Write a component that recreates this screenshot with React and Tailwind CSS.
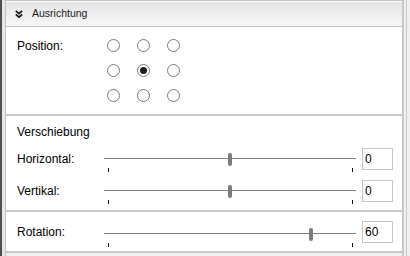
import React from 'react';

const Chevrons = () => (
  <svg width="8" height="8" viewBox="0 0 8 8" fill="none" stroke="#111" strokeWidth="1.7">
    <path d="M0.8 0.8 L4 3.6 L7.2 0.8" />
    <path d="M0.8 4.4 L4 7.2 L7.2 4.4" />
  </svg>
);

const Radio = ({ checked }) => (
  <span className="w-[13px] h-[13px] rounded-full border border-[#7a7a7a] bg-white flex items-center justify-center">
    {checked && <span className="w-[7px] h-[7px] rounded-full bg-[#1e1e1e]" />}
  </span>
);

const Slider = ({ pos, className = '' }) => (
  <div className={`relative w-[252px] h-[22px] ${className}`}>
    <div className="absolute left-0 right-0 top-[10px] h-px bg-[#7f7f7f]" />
    <div
      className="absolute top-[5px] w-[4px] h-[13px] rounded-[2px] bg-[#7b7b7b]"
      style={{ left: `${pos}px` }}
    />
    <div className="absolute left-[4px] top-[20px] w-px h-[4px] bg-[#111]" />
    <div className="absolute left-[248px] top-[20px] w-px h-[4px] bg-[#111]" />
  </div>
);

const SliderRow = ({ label, value, pos, sliderClass }) => (
  <div className="flex items-start h-[22px] pl-[11px]">
    <div className="w-[87px] h-[22px] flex items-center text-[12px]">{label}</div>
    <Slider pos={pos} className={sliderClass} />
    <div className="ml-[6px] w-[31px] h-[22px] border border-[#c6c6c6] bg-white flex items-center pl-[2px] text-[12px]">
      {value}
    </div>
  </div>
);

const positions = [false, false, false, false, true, false, false, false, false];

export default function App() {
  return (
    <div className="w-[410px] h-[256px] flex bg-[#f0f0f0] overflow-hidden font-['Liberation_Sans',Arial,sans-serif] text-black">
      <div className="w-[2px] bg-[#4f4f4f]" />
      <div className="w-[3px] bg-[#e6e6e6]" />

      <div className="w-[399px] flex flex-col border-l border-[#c4c4c4] border-r-2 border-r-[#c8c8c8] bg-white">
        <div className="h-px bg-[#c4c4c4]" />
        <div className="h-px bg-white" />

        {/* header */}
        <div className="h-[25px] flex items-center gap-[9px] pl-[9px] bg-gradient-to-b from-[#e4e4e4] to-[#f8f8f8] border-b border-[#c4c4c4]">
          <Chevrons />
          <span className="text-[10.5px] text-[#1a1a1a]">Ausrichtung</span>
        </div>

        {/* Position */}
        <div className="flex items-start pl-[11px] pt-[6px] pb-[6px] border-b-2 border-[#c8c8c8]">
          <div className="w-[81px] h-[25px] flex items-center text-[12px]">Position:</div>
          <div className="grid grid-cols-3">
            {positions.map((c, i) => (
              <div key={i} className="w-[30px] h-[25px] flex items-center justify-center">
                <Radio checked={c} />
              </div>
            ))}
          </div>
        </div>

        {/* Verschiebung */}
        <div className="flex flex-col pt-[8px] pb-[8px] border-b-2 border-[#c8c8c8]">
          <div className="h-[16px] flex items-center pl-[11px] text-[12px]">Verschiebung</div>
          <div className="mt-[8px]">
            <SliderRow label="Horizontal:" value="0" pos={124} />
          </div>
          <div className="mt-[10px]">
            <SliderRow label="Vertikal:" value="0" pos={124} />
          </div>
        </div>

        {/* Rotation */}
        <div className="pt-[9px] pb-[8px] border-b-2 border-[#c8c8c8]">
          <SliderRow label="Rotation:" value="60" pos={205} sliderClass="mt-[2px]" />
        </div>

        <div className="flex-1 bg-[#f0f0f0]" />
      </div>

      <div className="w-[2px] bg-[#f0f0f0]" />
      <div className="w-px bg-[#c8c8c8]" />
      <div className="flex-1 bg-[#f0f0f0]" />
    </div>
  );
}
